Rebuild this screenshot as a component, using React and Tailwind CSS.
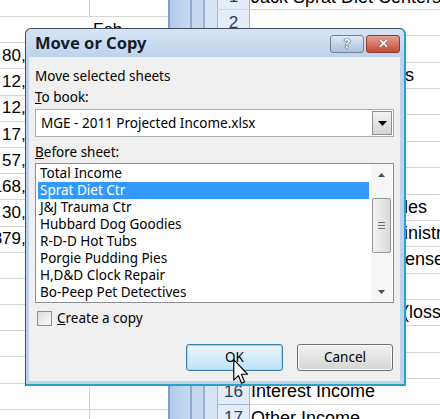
import React from "react";

const leftNums = ["80", "12", "12", "17", "57", "168", "30", "879"];

const rightRows = [
  { n: "2" },
  { n: "3" },
  { n: "4", t: "Projected Revenues", pl: "pl-[2px]" },
  { n: "5" },
  { n: "6" },
  { n: "7" },
  { n: "8" },
  { n: "9", t: "Marketing & Sales", pl: "pl-[31px]" },
  { n: "10", t: "General & Administrative", pl: "pl-[32px]" },
  { n: "11", t: "Operating Expenses", pl: "pl-[40px]" },
  { n: "12" },
  { n: "13", t: "Operating Income (loss)", pl: "pl-[5px]" },
  { n: "14" },
  { n: "15" },
  { n: "16", t: "Interest Income", pl: "pl-[1px]" },
  { n: "17", t: "Other Income", pl: "pl-[1px]" },
];

const sheets = [
  "Total Income",
  "Sprat Diet Ctr",
  "J&J Trauma Ctr",
  "Hubbard Dog Goodies",
  "R-D-D Hot Tubs",
  "Porgie Pudding Pies",
  "H,D&D Clock Repair",
  "Bo-Peep Pet Detectives",
];

function LeftSheet() {
  return (
    <div className="w-[168px] shrink-0 h-full flex flex-col bg-white text-[17px]">
      <div className="h-[17px] shrink-0 flex border-b border-[#d4d4d4]">
        <div className="w-[90px] border-r border-[#d4d4d4]" />
        <div className="flex-1" />
      </div>
      <div className="h-[26.2px] shrink-0 flex items-center border-b border-[#d4d4d4]">
        <div className="w-[90px]" />
        <div className="pl-[3px]">Feb</div>
      </div>
      {leftNums.map((n, i) => (
        <div key={i} className="h-[26.2px] shrink-0 flex items-center border-b border-[#d4d4d4]">
          <div className="w-[90px] h-full flex items-center border-r border-[#d4d4d4]">
            <div className="w-[21px] flex justify-end whitespace-nowrap">{n}</div>
            <span>,000</span>
          </div>
        </div>
      ))}
      {[0, 1, 2, 3, 4, 5, 6].map((i) => (
        <div key={"e" + i} className="h-[26.2px] shrink-0 flex border-b border-[#d4d4d4]">
          <div className="w-[90px] border-r border-[#d4d4d4]" />
        </div>
      ))}
    </div>
  );
}

function Frame() {
  return (
    <div className="w-[49px] shrink-0 h-full flex">
      <div className="w-[2px] bg-[#7f9fc9]" />
      <div className="w-[20px] bg-gradient-to-r from-[#b3cbe9] to-[#c8dbf1]" />
      <div className="w-[2px] bg-[#8eabd2]" />
      <div className="w-[11px] bg-[#c4d7ee]" />
      <div className="w-[2px] bg-[#98b2d5]" />
      <div className="w-[12px] bg-[#d7e4f4]" />
    </div>
  );
}

function RightSheet() {
  return (
    <div className="flex-1 min-w-0 overflow-hidden h-full flex flex-col bg-white text-[18px]">
      <div className="h-[10px] shrink-0 overflow-hidden flex border-b border-[#d4d4d4]">
        <div className="w-[33px] shrink-0 bg-[#e4ecf7] border-l border-r border-[#9eb6ce] flex justify-center text-[17px]">
          <div className="h-[26px] -mt-[16px] flex items-center text-[#2a3f5c]">1</div>
        </div>
        <div className="pl-[1px]">
          <div className="h-[26px] -mt-[16px] flex items-center whitespace-nowrap">Jack Sprat Diet Centers</div>
        </div>
      </div>
      {rightRows.map((r) => (
        <div key={r.n} className="h-[26.36px] shrink-0 flex border-b border-[#d4d4d4]">
          <div className="w-[33px] shrink-0 bg-[#e4ecf7] border-l border-r border-b border-[#9eb6ce] -mb-px flex items-center justify-center text-[17px] text-[#2a3f5c]">
            {r.n}
          </div>
          <div className={"flex items-center whitespace-nowrap " + (r.pl || "")}>{r.t || ""}</div>
        </div>
      ))}
    </div>
  );
}

function Cursor() {
  return (
    <svg className="absolute left-[233px] top-[359px]" width="16" height="25" viewBox="0 0 12 19">
      <path
        d="M0.5 0.5 L0.5 16 L4 12.6 L6.4 18.4 L8.7 17.4 L6.3 11.6 L11 11.6 Z"
        fill="white"
        stroke="black"
        strokeWidth="0.9"
        strokeLinejoin="round"
      />
    </svg>
  );
}

function Dialog() {
  return (
    <div className="absolute left-[25px] top-[28px] w-[381px] h-[358px] flex flex-col rounded-t-[6px] border-l border-t border-r-2 border-b-2 border-[#3f4a5a] border-r-[#2b9fce] border-b-[#2b9fce] bg-[#bed3ea] font-['Noto_Sans',sans-serif] text-[13.5px] text-black">
      <div className="h-[28px] shrink-0 flex items-center pl-[9px] pr-[4px] rounded-t-[6px] bg-gradient-to-b from-[#d6e5f5] to-[#bdd3ec]">
        <div className="font-bold text-[16.5px] text-[#141c26]">Move or Copy</div>
        <div className="ml-auto flex gap-[2px] items-center pt-[1px]">
          <div className="w-[34px] h-[18px] rounded-[3px] border border-[#6f829c] bg-gradient-to-b from-[#dfe9f5] to-[#aac1dc] flex items-center justify-center font-bold text-[13px] text-white [text-shadow:0_0_1px_#2b3a50,0_0_1px_#2b3a50,0_0_1px_#2b3a50]">
            ?
          </div>
          <div className="w-[34px] h-[18px] rounded-[3px] border border-[#8a3b30] bg-gradient-to-b from-[#e4a195] to-[#c4493a] flex items-center justify-center font-bold text-[13px] text-white [text-shadow:0_0_1px_#5a1d15,0_0_1px_#5a1d15]">
            ✕
          </div>
        </div>
      </div>
      <div className="flex-1 ml-[3px] mr-[4px] mb-[3px] bg-[#f0f0f0] flex flex-col pl-[6px] pr-[6px] pt-[10px]">
        <div className="h-[18px] flex items-center">Move selected sheets</div>
        <div className="h-[18px] mt-[3px] flex items-center">
          <span>
            <u>T</u>o book:
          </span>
        </div>
        <div className="h-[28px] mt-[3px] flex items-center bg-white border border-[#a9abb2]">
          <div className="flex-1 pl-[5px]">MGE - 2011 Projected Income.xlsx</div>
          <div className="w-[20px] h-[24px] mr-[1px] border border-[#8d8f93] bg-gradient-to-b from-[#f4f4f4] to-[#d4d4d4] flex items-center justify-center">
            <svg width="9" height="5" viewBox="0 0 9 5">
              <path d="M0 0 H9 L4.5 5 Z" fill="black" />
            </svg>
          </div>
        </div>
        <div className="h-[18px] mt-[6px] flex items-center">
          <span>
            <u>B</u>efore sheet:
          </span>
        </div>
        <div className="h-[140px] mt-[2px] bg-white border border-[#8c8f96] flex">
          <div className="flex-1 flex flex-col pt-[1px] px-[2px]">
            {sheets.map((s, i) => (
              <div
                key={s}
                className={
                  "h-[17px] shrink-0 flex items-center pl-[2px] whitespace-nowrap " +
                  (i === 1 ? "bg-[#3399ff] text-white" : "")
                }
              >
                {s}
              </div>
            ))}
          </div>
          <div className="w-[21px] mr-[1px] flex flex-col bg-[#f6f6f6]">
            <div className="h-[21px] shrink-0 flex items-center justify-center">
              <svg width="7" height="4" viewBox="0 0 7 4">
                <path d="M3.5 0 L7 4 H0 Z" fill="#4d4d4d" />
              </svg>
            </div>
            <div className="flex-1 flex flex-col">
              <div className="mt-[13px] h-[55px] mx-[1px] rounded-[2px] border border-[#979797] bg-gradient-to-r from-[#f4f4f4] to-[#d9d9d9] flex flex-col items-center justify-center gap-[2px]">
                <div className="w-[7px] h-px bg-[#6e6e6e]" />
                <div className="w-[7px] h-px bg-[#6e6e6e]" />
                <div className="w-[7px] h-px bg-[#6e6e6e]" />
              </div>
            </div>
            <div className="h-[21px] shrink-0 flex items-center justify-center">
              <svg width="7" height="4" viewBox="0 0 7 4">
                <path d="M0 0 H7 L3.5 4 Z" fill="#4d4d4d" />
              </svg>
            </div>
          </div>
        </div>
        <div className="h-[18px] mt-[6px] flex items-center gap-[5px] pl-[2px]">
          <div className="w-[15px] h-[15px] border border-[#8e8f8f] bg-gradient-to-br from-[#dcdcdc] to-[#fafafa]" />
          <span>
            <u>C</u>reate a copy
          </span>
        </div>
        <div className="mt-[17px] h-[27px] flex justify-end gap-[14px] pr-[1px]">
          <div className="w-[97px] h-full rounded-[3px] border border-[#3c7fb1] bg-gradient-to-b from-[#eaf6fd] to-[#bfe3f7] shadow-[inset_0_0_0_1px_#9fd7f5] flex items-center justify-center">
            OK
          </div>
          <div className="w-[96px] h-full rounded-[3px] border border-[#707070] bg-gradient-to-b from-[#f2f2f2] to-[#d5d5d5] shadow-[inset_0_0_0_1px_#fbfbfb] flex items-center justify-center">
            Cancel
          </div>
        </div>
      </div>
    </div>
  );
}

export default function App() {
  return (
    <div className="relative w-[440px] h-[419px] overflow-hidden bg-white font-['Liberation_Sans',Arial,sans-serif] text-black">
      <div className="w-full h-full flex">
        <LeftSheet />
        <Frame />
        <RightSheet />
      </div>
      <Dialog />
      <Cursor />
    </div>
  );
}
